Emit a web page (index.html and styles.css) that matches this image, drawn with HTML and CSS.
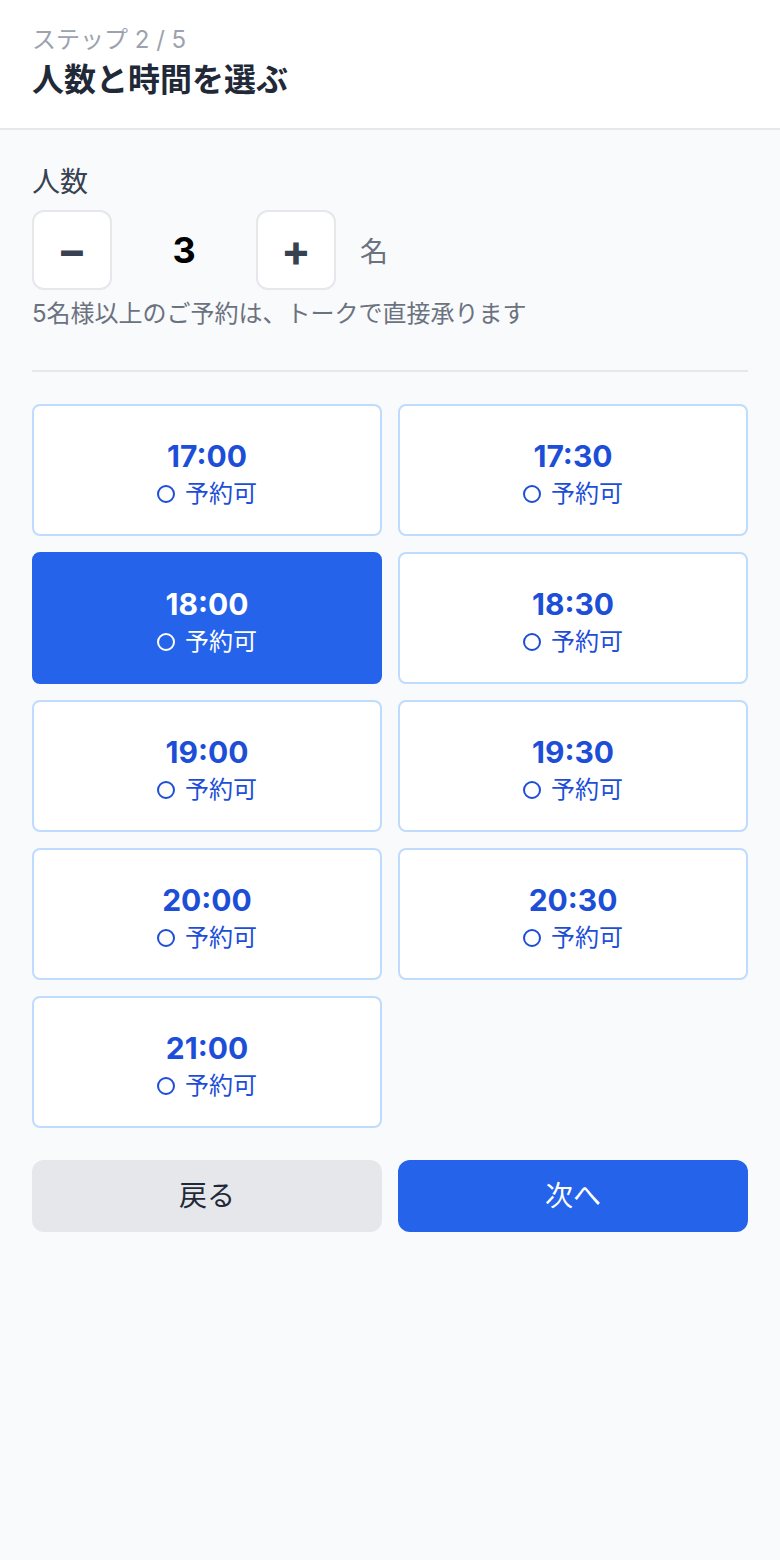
FILE: index.html
```html
<!DOCTYPE html>
<html lang="ja">
<head>
    <meta charset="UTF-8">
    <meta name="viewport" content="width=device-width, initial-scale=1.0">
    <title>人数と時間を選ぶ</title>
    <link rel="stylesheet" href="styles.css">
</head>
<body>
    <header class="header">
        <div class="step">ステップ 2 / 5</div>
        <h1 class="title">人数と時間を選ぶ</h1>
    </header>

    <main class="main">
        <section class="party">
            <div class="label">人数</div>
            <div class="stepper">
                <button class="step-btn" aria-label="減らす">−</button>
                <div class="count">3</div>
                <button class="step-btn" aria-label="増やす">+</button>
                <span class="unit">名</span>
            </div>
            <p class="note">5名様以上のご予約は、トークで直接承ります</p>
        </section>

        <hr class="divider">

        <div class="slots">
            <button class="slot"><span class="time">17:00</span><span class="status"><i class="dot"></i>予約可</span></button>
            <button class="slot"><span class="time">17:30</span><span class="status"><i class="dot"></i>予約可</span></button>
            <button class="slot active"><span class="time">18:00</span><span class="status"><i class="dot"></i>予約可</span></button>
            <button class="slot"><span class="time">18:30</span><span class="status"><i class="dot"></i>予約可</span></button>
            <button class="slot"><span class="time">19:00</span><span class="status"><i class="dot"></i>予約可</span></button>
            <button class="slot"><span class="time">19:30</span><span class="status"><i class="dot"></i>予約可</span></button>
            <button class="slot"><span class="time">20:00</span><span class="status"><i class="dot"></i>予約可</span></button>
            <button class="slot"><span class="time">20:30</span><span class="status"><i class="dot"></i>予約可</span></button>
            <button class="slot"><span class="time">21:00</span><span class="status"><i class="dot"></i>予約可</span></button>
        </div>

        <div class="actions">
            <button class="btn back">戻る</button>
            <button class="btn next">次へ</button>
        </div>
    </main>
</body>
</html>
```

FILE: styles.css
```css
* {
    box-sizing: border-box;
}
body {
    margin: 0;
    min-height: 100vh;
    background-color: #f9fafb;
    font-family: Inter, "Noto Sans CJK JP", sans-serif;
    color: #1f2937;
}
button {
    font-family: inherit;
    cursor: pointer;
}
.header {
    background-color: #ffffff;
    border-bottom: 2px solid #e5e7eb;
    padding: 24px 32px;
}
.step {
    font-size: 24px;
    line-height: 32px;
    color: #9ca3af;
}
.title {
    margin: 0;
    font-size: 32px;
    line-height: 48px;
    font-weight: 700;
    color: #1f2937;
}
.main {
    padding: 32px;
}
.label {
    font-size: 28px;
    line-height: 40px;
    color: #374151;
    margin-bottom: 8px;
}
.stepper {
    display: flex;
    align-items: center;
    gap: 24px;
}
.step-btn {
    width: 80px;
    height: 80px;
    padding: 0;
    border: 2px solid #e5e7eb;
    border-radius: 12px;
    background-color: #ffffff;
    font-size: 44px;
    font-weight: 700;
    color: #374151;
    display: flex;
    align-items: center;
    justify-content: center;
}
.count {
    width: 96px;
    text-align: center;
    font-size: 36px;
    font-weight: 700;
    color: #000000;
}
.unit {
    font-size: 28px;
    color: #6b7280;
}
.note {
    margin: 8px 0 0;
    font-size: 24px;
    line-height: 32px;
    color: #6b7280;
}
.divider {
    margin: 40px 0 32px;
    border: none;
    border-top: 2px solid #e5e7eb;
}
.slots {
    display: grid;
    grid-template-columns: 1fr 1fr;
    gap: 16px;
}
.slot {
    display: flex;
    flex-direction: column;
    align-items: center;
    padding: 24px 0;
    border: 2px solid #bfdbfe;
    border-radius: 8px;
    background-color: #ffffff;
    color: #1d4ed8;
}
.slot.active {
    background-color: #2563eb;
    border-color: #2563eb;
    color: #ffffff;
}
.time {
    font-size: 30px;
    line-height: 48px;
    font-weight: 700;
    padding-top: 2px;
    margin-bottom: -2px;
}
.status {
    display: flex;
    align-items: center;
    font-size: 24px;
    line-height: 32px;
}
.dot {
    width: 18px;
    height: 18px;
    margin-right: 10px;
    border: 2.5px solid currentColor;
    border-radius: 50%;
}
.actions {
    display: grid;
    grid-template-columns: 1fr 1fr;
    gap: 16px;
    margin-top: 32px;
}
.btn {
    padding: 16px;
    border: none;
    border-radius: 12px;
    font-size: 28px;
    line-height: 40px;
}
.btn.back {
    background-color: #e5e7eb;
    color: #1f2937;
}
.btn.next {
    background-color: #2563eb;
    color: #ffffff;
}
```
